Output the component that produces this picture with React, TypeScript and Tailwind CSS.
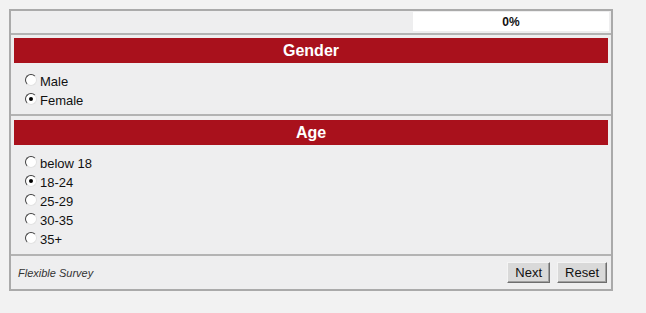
import React from "react";

type Option = { label: string; checked?: boolean };

const genderOptions: Option[] = [{ label: "Male" }, { label: "Female", checked: true }];
const ageOptions: Option[] = [
  { label: "below 18" },
  { label: "18-24", checked: true },
  { label: "25-29" },
  { label: "30-35" },
  { label: "35+" },
];

function Radio({ checked }: { checked?: boolean }) {
  return (
    <span className="-mt-[3px] flex h-[12px] w-[12px] shrink-0 items-center justify-center rounded-full border-[1.5px] border-b-[#e2e2e2] border-l-[#404040] border-r-[#e2e2e2] border-t-[#404040] bg-white">
      {checked ? <span className="h-[4px] w-[4px] rounded-full bg-black" /> : null}
    </span>
  );
}

function Section({ title, options, top, bottom }: { title: string; options: Option[]; top: string; bottom: string }) {
  return (
    <div className={`border-b-2 border-[#b3b3b3] px-[3px] ${top} ${bottom}`}>
      <div className="flex h-[25px] items-center justify-center bg-[#a9111c] text-[16px] font-bold text-white">{title}</div>
      <div className="mt-[9px] pl-[11px]">
        {options.map((opt) => (
          <label className="flex h-[19px] items-center gap-[3px] text-[13px] leading-[19px] text-[#111]" key={opt.label}>
            <Radio checked={opt.checked} />
            <span>{opt.label}</span>
          </label>
        ))}
      </div>
    </div>
  );
}

function ClassicButton({ children }: { children: React.ReactNode }) {
  return (
    <button className="h-[21px] border border-b-[#6e6e6e] border-l-[#f4f4f4] border-r-[#6e6e6e] border-t-[#f4f4f4] bg-[#d9d9d9] px-[7px] text-[13px] leading-[18px] text-[#111] shadow-[inset_-1px_-1px_0_#a0a0a0]">
      {children}
    </button>
  );
}

export default function App() {
  return (
    <div className="min-h-[313px] bg-[#f2f2f2] pl-[9px] pt-[9px]" style={{ fontFamily: '"Liberation Sans", Arial, sans-serif' }}>
      <div className="w-[604px] border-2 border-[#aaaaaa] bg-[#eeeeef]">
        <div className="flex h-[24px] justify-end border-b-2 border-[#b3b3b3] pr-[2px] pt-[1px]">
          <div className="flex h-[19px] w-[196px] items-center justify-center bg-white text-[12px] font-bold text-[#111]">0%</div>
        </div>
        <Section bottom="pb-[4px]" options={genderOptions} title="Gender" top="pt-[3px]" />
        <Section bottom="pb-[5px]" options={ageOptions} title="Age" top="pt-[4px]" />
        <div className="flex h-[33px] items-center justify-between pl-[7px] pr-[4px]">
          <span className="mt-[2px] text-[11px] italic text-[#333]">Flexible Survey</span>
          <div className="flex gap-[7px]">
            <ClassicButton>Next</ClassicButton>
            <ClassicButton>Reset</ClassicButton>
          </div>
        </div>
      </div>
    </div>
  );
}
